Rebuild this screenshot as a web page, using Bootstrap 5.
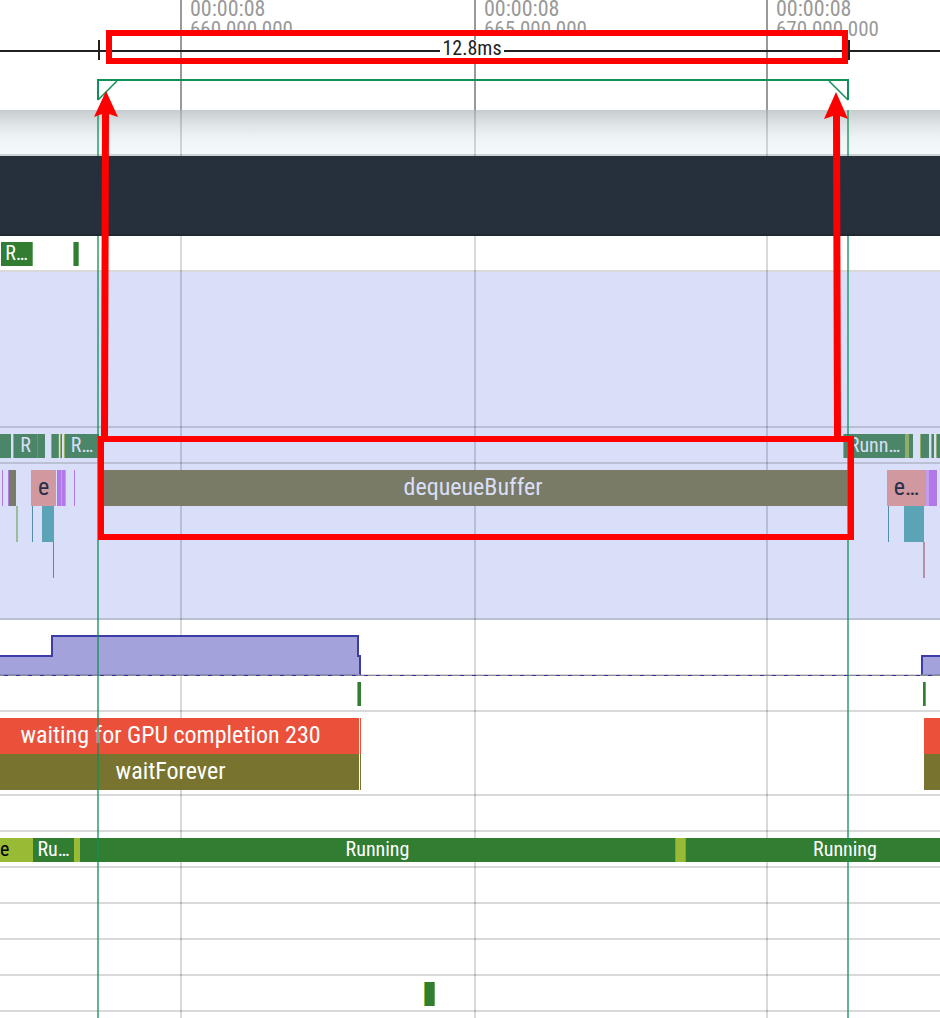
<!DOCTYPE html>
<html lang="en">
<head>
<meta charset="utf-8">
<meta name="viewport" content="width=device-width, initial-scale=1">
<title>Trace timeline</title>
<link href="https://cdn.jsdelivr.net/npm/bootstrap@5.3.0/dist/css/bootstrap.min.css" rel="stylesheet">
<style>
/* Horizontal values (--w width, --g gap before, --x start) are in trace units; 940 units span the window. */
body { font-family: "Roboto Condensed", Roboto, sans-serif; color: #212121; background: #fff; }
.timeline { overflow: hidden; }
.ruler { height: 110px; }
.tick { width: calc(var(--w) / 940 * 100%); margin-left: calc(var(--g, 0) / 940 * 100%); border-left: 2px solid #999; padding-left: 8px; color: #999; font-size: 22px; line-height: 20px; white-space: nowrap; }
.tick-label { margin-top: -1px; }
.tick-nanos { font-size: 21px; }
.span-line { top: 40px; height: 20px; }
.span-line::before { content: ""; position: absolute; left: 0; right: 0; top: 10px; height: 2px; background: #212121; }
.span-range { position: absolute; left: calc(var(--x) / 940 * 100%); width: calc(var(--w) / 940 * 100%); height: 20px; border: solid #212121; border-width: 0 2px; }
.span-label { background: #fff; font-size: 20px; line-height: 16px; height: 18px; padding: 0 2px; margin-right: 4px; }
.bracket { top: 79px; left: calc(var(--x) / 940 * 100%); width: calc(var(--w) / 940 * 100%); z-index: 3; border-top: 2px solid #0f9058; }
.shade { height: 46px; background: linear-gradient(#c7cccf, #dfe6e8 35%, #eff5f7 65%, #f4fafc); border-bottom: 2px solid #ccd3d5; }
.banner { height: 80px; background: #26303c; border-bottom: 2px solid #1e2833; z-index: 4; }
.track { min-height: 36px; padding-top: 6px; border-bottom: 2px solid #d9d9d9; }
.tall { min-height: 156px; }
.two-level { min-height: 84px; }
.chosen { background: #dadff9; border-color: #babfd4; }
.lane { position: relative; z-index: 2; display: flex; height: 24px; font-size: 20px; line-height: 22px; color: #fff; }
.lane.big { height: 36px; font-size: 24px; line-height: 34px; }
.slice { flex: none; width: calc(var(--w) / 940 * 100%); margin-left: calc(var(--g, 0) / 940 * 100%); overflow: hidden; white-space: nowrap; text-align: center; }
.from-before { padding-right: 18px; }
.past-end { padding-left: 64px; }
.run { background: #317d31; } .able { background: #99ba34; color: #000; }
.run-d { background: #4b8668; color: #dadff9; } .able-d { background: #8fae6a; }
.seam { border-right: 1px solid #649779; }
.edge { border-right: 1px solid #6ca56c; }
.olive-d { background: #797b66; color: #dadff9; }
.pink { background: #d1999f; color: #26304a; } .purple { background: #b078e8; } .lilac { background: #c59cf0; }
.sage { background: #9abd9b; } .blue { background: #558ea8; } .teal { background: #5ba4b5; } .wine { background: #aa6878; } .wine-d { background: #b78fa6; }
.red { background: #eb503b; } .olive { background: #78732e; }
.guides, .marks, .notes { inset: 0; }
.guides { top: 110px; z-index: 1; } .marks { top: 110px; z-index: 3; } .notes { z-index: 5; pointer-events: none; }
.guide { position: absolute; top: 0; bottom: 0; width: 2px; left: calc(var(--x) / 940 * 100%); background: rgba(0,0,0,.15); }
.marks .guide { background: rgba(15,144,88,.66); }
.counter { min-height: 56px; padding: 0; }
.counter svg { z-index: 2; height: 56px; margin-bottom: -2px; }
.note-box { position: absolute; border: 6px solid #f00; left: calc(var(--x) / 940 * 100%); width: calc(var(--w) / 940 * 100%); }
.note-time { top: 30px; height: 34px; } .note-slice { top: 436px; height: 104px; }
.arrow { position: absolute; top: 90px; left: calc(var(--x) / 940 * 100%); }
</style>
</head>
<body>
<main class="timeline position-relative min-vh-100">
  <header class="ruler position-relative d-flex">
    <div class="tick" style="--g:180;--w:294"><div class="tick-label">00:00:08</div><div class="tick-nanos">660 000 000</div></div>
    <div class="tick" style="--w:292"><div class="tick-label">00:00:08</div><div class="tick-nanos">665 000 000</div></div>
    <div class="tick" style="--w:174"><div class="tick-label">00:00:08</div><div class="tick-nanos">670 000 000</div></div>
    <div class="span-line position-absolute start-0 w-100">
      <div class="span-range d-flex justify-content-center align-items-start" style="--x:98;--w:752"><span class="span-label position-relative">12.8ms</span></div>
    </div>
    <div class="bracket position-absolute d-flex justify-content-between" style="--x:97;--w:752">
      <svg width="22" height="20" fill="none" stroke="#0f9058" stroke-width="2"><path d="M1 0V19"/><path d="M1 19L20 0" stroke-width="1.5"/></svg>
      <svg width="22" height="20" fill="none" stroke="#0f9058" stroke-width="2"><path d="M21 0V19"/><path d="M21 19L2 0" stroke-width="1.5"/></svg>
    </div>
  </header>
  <div class="shade"></div>
  <div class="banner position-relative"></div>

  <section class="track"><div class="lane">
    <div class="slice run edge" style="--g:1;--w:32">R…</div><div class="slice able" style="--g:40;--w:1"></div><div class="slice run edge" style="--w:5"></div>
  </div></section>
  <section class="track tall chosen"></section>
  <section class="track chosen"><div class="lane">
    <div class="slice run-d" style="--w:11"></div><div class="slice able-d" style="--g:2;--w:1"></div><div class="slice run-d seam" style="--w:24">R</div><div class="slice run-d" style="--w:7"></div>
    <div class="slice able-d" style="--g:6;--w:1"></div><div class="slice run-d seam" style="--w:7"></div><div class="slice able-d" style="--g:1;--w:1"></div><div class="slice run-d" style="--w:1"></div>
    <div class="slice able-d" style="--g:2;--w:1"></div><div class="slice run-d" style="--w:34">R…</div>
    <div class="slice able-d" style="--g:744;--w:1"></div><div class="slice run-d" style="--w:61">Runn…</div><div class="slice able-d" style="--w:4"></div><div class="slice run-d" style="--w:4"></div>
    <div class="slice able-d" style="--g:7;--w:1"></div><div class="slice run-d" style="--w:8"></div><div class="slice able-d" style="--g:2;--w:1"></div><div class="slice run-d" style="--w:2"></div><div class="slice able-d" style="--g:2;--w:1"></div><div class="slice run-d" style="--w:3"></div>
  </div></section>
  <section class="track tall chosen">
    <div class="lane big">
      <div class="slice purple" style="--g:2;--w:1"></div><div class="slice purple" style="--g:5;--w:1"></div><div class="slice olive-d" style="--w:7"></div>
      <div class="slice pink" style="--g:15;--w:25">e</div><div class="slice purple" style="--g:1;--w:4"></div><div class="slice lilac" style="--w:1"></div><div class="slice purple" style="--w:3"></div><div class="slice lilac" style="--w:1"></div><div class="slice purple" style="--g:8;--w:1"></div>
      <div class="slice olive-d" style="--g:23;--w:750">dequeueBuffer</div>
      <div class="slice pink" style="--g:39;--w:39">e…</div><div class="slice lilac" style="--w:3"></div><div class="slice purple" style="--w:8"></div>
    </div>
    <div class="lane big">
      <div class="slice sage" style="--g:16;--w:2"></div><div class="slice blue" style="--g:14;--w:1"></div><div class="slice teal" style="--g:9;--w:12"></div>
      <div class="slice blue" style="--g:834;--w:1"></div><div class="slice teal" style="--g:15;--w:20"></div>
    </div>
    <div class="lane big">
      <div class="slice wine" style="--g:53;--w:1"></div><div class="slice wine-d" style="--g:869;--w:2"></div>
    </div>
  </section>
  <section class="track counter">
    <svg class="position-relative d-block w-100" viewBox="0 0 940 56" preserveAspectRatio="none">
      <path d="M0 56V36H52V16H358V36H360V56ZM922 56V36H940V56Z" fill="#a3a2db"/>
      <path d="M0 36H52V16H358V36H360V55M922 55V36H940" fill="none" stroke="#3d3da6" stroke-width="2"/>
      <path d="M0 54.5H360M922 54.5H940" stroke="#8b8bba"/>
      <path d="M0 55.5H940" stroke="#8e8a9c"/>
      <path d="M4 55.5H940" stroke="#3030a0" stroke-dasharray="4 8"/>
    </svg>
  </section>
  <section class="track"><div class="lane">
    <div class="slice able" style="--g:357;--w:1"></div><div class="slice run" style="--w:3"></div><div class="slice run edge" style="--g:562;--w:3"></div>
  </div></section>
  <section class="track two-level">
    <div class="lane big"><div class="slice red from-before" style="--w:359">waiting for GPU completion 230</div><div class="slice red" style="--g:1;--w:1"></div><div class="slice red" style="--g:563;--w:16"></div></div>
    <div class="lane big"><div class="slice olive from-before" style="--w:359">waitForever</div><div class="slice olive" style="--g:1;--w:1"></div><div class="slice olive" style="--g:563;--w:16"></div></div>
  </section>
  <section class="track"></section>
  <section class="track"><div class="lane">
    <div class="slice able text-start" style="--w:33">e</div><div class="slice run" style="--w:41">Ru…</div><div class="slice able" style="--w:6"></div><div class="slice run edge" style="--w:596">Running</div><div class="slice able edge" style="--w:10"></div><div class="slice run past-end" style="--w:254"><span>Running</span></div>
  </div></section>
  <section class="track"></section>
  <section class="track"></section>
  <section class="track"></section>
  <section class="track"><div class="lane">
    <div class="slice able" style="--g:424;--w:1"></div><div class="slice run edge" style="--w:10"></div>
  </div></section>

  <div class="guides position-absolute"><div class="guide" style="--x:180"></div><div class="guide" style="--x:474"></div><div class="guide" style="--x:766"></div></div>
  <div class="marks position-absolute"><div class="guide" style="--x:97"></div><div class="guide" style="--x:847"></div></div>
  <div class="notes position-absolute">
    <div class="note-box note-time" style="--x:106;--w:742"></div>
    <div class="note-box note-slice" style="--x:98;--w:756"></div>
    <svg class="arrow" style="--x:94" width="26" height="350" fill="#f00"><path d="M12 1L24 27L15 24L14 350H7L8 24L0 27Z"/></svg>
    <svg class="arrow" style="--x:824" width="26" height="350" fill="#f00"><path d="M12 2L24 29L16 26L17 350H10L9 26L0 29Z"/></svg>
  </div>
</main>
<script src="https://cdn.jsdelivr.net/npm/bootstrap@5.3.0/dist/js/bootstrap.bundle.min.js"></script>
</body>
</html>
